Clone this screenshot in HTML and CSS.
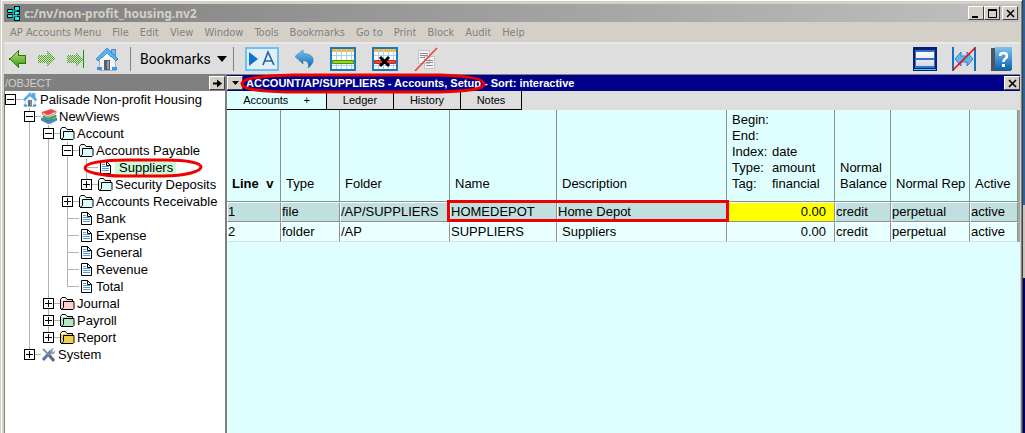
FILE: index.html
```html
<!DOCTYPE html>
<html lang="en">

<head>
    <meta charset="UTF-8">
    <meta name="viewport" content="width=device-width, initial-scale=1.0">
    <title>c:/nv/non-profit_housing.nv2</title>
    <link rel="stylesheet" href="styles.css">
</head>

<body>
    <!-- shared icons -->
    <svg class="defs" width="0" height="0">
        <defs>
            <linearGradient id="green" x1="0" y1="0" x2="0" y2="1">
                <stop offset="0" stop-color="#b5e07c"></stop>
                <stop offset="1" stop-color="#3f9a10"></stop>
            </linearGradient>
            <linearGradient id="blue" x1="0" y1="0" x2="0" y2="1">
                <stop offset="0" stop-color="#7cc4ee"></stop>
                <stop offset="1" stop-color="#0a62b0"></stop>
            </linearGradient>
            <linearGradient id="pane" x1="0" y1="0" x2="0" y2="1">
                <stop offset="0" stop-color="#ffffff"></stop>
                <stop offset="1" stop-color="#d4d8e2"></stop>
            </linearGradient>
            <pattern id="dots" width="2" height="2" patternUnits="userSpaceOnUse">
                <rect width="1" height="1" fill="#4fa81e"></rect>
                <rect x="1" y="1" width="1" height="1" fill="#4fa81e"></rect>
            </pattern>
            <symbol id="house" viewBox="0 0 22 24">
                <path d="M15 2h4v7h-4z" fill="#7fb8e8" stroke="#4a8cc8"></path>
                <path d="M3 12 11 4l8 8v11H3z" fill="#f4f6f8" stroke="#9db4c8"></path>
                <path d="M11 1 0 12l2 2 9-8 9 8 2-2z" fill="#58b4f0" stroke="#1874c0" stroke-width=".7"></path>
                <path d="M8 13h6v10H8z" fill="#5a5f68"></path>
                <path d="M11 14h2v8h-2z" fill="#9aa0a8"></path>
                <path d="M1 20h5v3H1zM16 20h5v3h-5z" fill="#3a94e0"></path>
            </symbol>
            <symbol id="folder" viewBox="0 0 15 13">
                <path d="M.5 12V2.500L2 .5h3.500L7 2.500h5.500v2" fill="#fff" stroke="#000"></path>
                <path d="M1 3h11v2H4l-2 6H1z" fill="currentColor"></path>
                <path d="M3.500 4.500h10.500v7l-1 1H1l2.500-2z" fill="currentColor" stroke="#000"></path>
            </symbol>
            <symbol id="page" viewBox="0 0 11 13">
                <path d="M.5.5h6l4 4v8H.5z" fill="#fff" stroke="#000"></path>
                <path d="M6.500.5v4h4" fill="none" stroke="#000"></path>
                <path d="M2 3.500h3M2 5.500h7M2 7.500h7M2 9.500h7" stroke="#4aa0e0"></path>
            </symbol>
            <symbol id="sheet" viewBox="0 0 26 24">
                <path d="M1 1h24v22H1z" fill="#fff" stroke="#1c7ab8" stroke-width="2"></path>
                <path d="M2 2h22v3H2z" fill="#fcb838"></path>
                <path d="M6.500 2v20M11.500 2v20M16.500 2v20M21.500 2v20M2 8.500h22M2 18.500h22" stroke="#a8d0ec"></path>
            </symbol>
        </defs>
    </svg>

    <div class="window">
        <header class="titlebar">
            <svg class="logo" viewBox="0 0 14 15">
                <path d="M.5 3.500h5v3h-5zM.5 8.500h5v3h-5zM7.500.5h5v4h-5zM7.500 5.500h5v3h-5zM7.500 10.500h5v4h-5z" fill="#00ffff" stroke="#000"></path>
                <path d="M5 5h3M5 10h3M9 4v7" stroke="#00ffff"></path>
            </svg>
            <h1>c:/nv/non-profit_housing.nv2</h1>
            <div class="winbtns">
                <button aria-label="Minimize"><svg viewBox="0 0 9 9"><path d="M0 8h6" stroke="#000" stroke-width="2"></path></svg></button>
                <button aria-label="Maximize"><svg viewBox="0 0 9 9"><path d="M.5 1v7.500h8V1" fill="none" stroke="#000"></path><path d="M0 1h9" stroke="#000" stroke-width="2"></path></svg></button>
                <button class="close" aria-label="Close"><svg viewBox="0 0 9 9"><path d="m1 1 7 7M8 1 1 8" stroke="#000" stroke-width="1.600"></path></svg></button>
            </div>
        </header>

        <nav class="menu">
            <button>AP Accounts Menu</button>
            <button>File</button>
            <button>Edit</button>
            <button>View</button>
            <button>Window</button>
            <button>Tools</button>
            <button>Bookmarks</button>
            <button>Go to</button>
            <button>Print</button>
            <button>Block</button>
            <button>Audit</button>
            <button>Help</button>
        </nav>

        <div class="toolbar">
            <div class="group arrows">
                <button aria-label="Back"><svg width="17" height="18" viewBox="0 0 17 18"><path d="M.7 9 9 1v4h7v8H9v4z" fill="url(#green)" stroke="#2c7a0c"></path></svg></button>
                <button aria-label="Forward"><svg width="17" height="18" viewBox="0 0 17 18"><path d="M17 9 9 1v4H0v8h9v4z" fill="url(#dots)"></path></svg></button>
                <button aria-label="Last"><svg width="17" height="18" viewBox="0 0 17 18"><path d="M16 9 9 1v4H0v8h9v4z" fill="url(#dots)"></path><path d="M16 0h1v18h-1z" fill="#00a000"></path></svg></button>
                <button aria-label="Home"><svg width="22" height="24"><use href="#house"></use></svg></button>
            </div>
            <button class="group bookmarks">Bookmarks
                <svg width="10" height="6" viewBox="0 0 10 6"><path d="M0 0h10L5 6z"></path></svg>
            </button>
            <div class="group tools">
                <button aria-label="Play"><svg width="34" height="24" viewBox="0 0 34 24"><path d="M1 1h32v22H1z" fill="#e4eef6" stroke="#6cc0f4" stroke-width="2"></path><path d="M4 5v14l9-7z" fill="#1070d0"></path><path d="m18 18 5-13 6 13M20 14h7" fill="none" stroke="#2060a8" stroke-width="1.600"></path></svg></button>
                <button aria-label="Undo"><svg width="19" height="20" viewBox="0 0 19 20"><path d="M0 7.500 8 1v3.500c8 0 11 4 10 8-.5 3-3 5-5 6.500 1-3 1-7-5-7.500V15z" fill="url(#blue)" stroke="#2a80b8" stroke-width=".6"></path></svg></button>
                <button aria-label="Insert row"><svg width="26" height="24" viewBox="0 0 26 24"><use href="#sheet"></use><path d="M2.500 13.500h21v3h-21z" fill="#9cd818" stroke="#4a9010"></path></svg></button>
                <button aria-label="Delete row"><svg width="26" height="24" viewBox="0 0 26 24"><use href="#sheet"></use><path d="M2.500 13.500h21v3h-21z" fill="#e84840" stroke="#c02820"></path><path d="m8 10 9 9M17 10l-9 9" stroke="#000" stroke-width="3"></path></svg></button>
                <button aria-label="No notes"><svg width="24" height="24" viewBox="0 0 24 24"><path d="M4.500 3.500h11v13h-11zM10.500 9.500h10v12h-10z" fill="#f4f4f4" stroke="#c4c4c4"></path><path d="M6 6.500h8M6 8.500h8M6 10.500h5M12 13.500h7M12 15.500h7M12 18.500h7" stroke="#8c8c8c"></path><path d="M1 24 23 1" stroke="#f04040" stroke-width="1.600"></path></svg></button>
            </div>
            <div class="group right">
                <button aria-label="Split view"><svg width="24" height="24" viewBox="0 0 24 24"><path d="M0 0h24v24H0z" fill="#08206c"></path><path d="M2 3h20v18H2z" fill="#3470d0"></path><path d="M3 5h18v6H3zM3 13h18v6H3z" fill="url(#pane)"></path><path d="M1 22.500h22" stroke="#28d8f8"></path></svg></button>
                <button aria-label="Fit width"><svg width="24" height="24" viewBox="0 0 24 24"><path d="M1 0v24M23 0v24" stroke="#1870c0" stroke-width="2"></path><path d="m3 12 6-7v4h6V5l6 7-6 7v-4H9v4z" fill="#5cb8ec" stroke="#2a80c8"></path><path d="M1 23 23 1" stroke="#f00" stroke-width="1.600"></path></svg></button>
                <button aria-label="Help"><svg width="21" height="24" viewBox="0 0 21 24"><path d="M0 1h20v23H0z" fill="#4a5560"></path><path d="M4 0h17v23H4z" fill="url(#blue)"></path><path d="M9 9c0-4 7-4 7 0 0 3-3.500 2-3.500 6" fill="none" stroke="#fff" stroke-width="2.500"></path><path d="M11 17h3v3h-3z" fill="#fff"></path></svg></button>
            </div>
        </div>

        <main class="panes">
            <section class="explorer">
                <div class="panehead">
                    <h2>/OBJECT</h2>
                    <button aria-label="Expand pane"><svg width="9" height="9" viewBox="0 0 9 9"><path d="M0 4.500h6" stroke="#000" stroke-width="2"></path><path d="M4 .5 9 4.500l-5 4z"></path></svg></button>
                </div>
                <ul class="tree">
                    <li>
                        <div class="node"><button class="toggle" aria-label="Collapse"></button><i></i><svg width="16" height="15"><use href="#house"></use></svg><a href="#">Palisade Non-profit Housing</a></div>
                        <ul>
                            <li>
                                <div class="node"><button class="toggle" aria-label="Collapse"></button><i></i><svg width="16" height="15" viewBox="0 0 16 15"><path d="m1 3 9-3 5 2-8 4z" fill="#e84848"></path><path d="m1 3 6 3 8-4v2L7 8 1 5z" fill="#f8d8d8" stroke="#b83030" stroke-width=".6"></path><path d="m2 7 5 2 8-3v2l-8 4-5-3z" fill="#40b060" stroke="#287840" stroke-width=".6"></path><path d="m0 9 7 3 9-3v2l-8 4-8-4z" fill="#4090d8" stroke="#2060a0" stroke-width=".6"></path></svg><a href="#">NewViews</a></div>
                                <ul>
                                    <li>
                                        <div class="node"><button class="toggle" aria-label="Collapse"></button><i></i><svg class="aqua" width="15" height="13"><use href="#folder"></use></svg><a href="#">Account</a></div>
                                        <ul>
                                            <li>
                                                <div class="node"><button class="toggle" aria-label="Collapse"></button><i></i><svg class="aqua" width="15" height="13"><use href="#folder"></use></svg><a href="#">Accounts Payable</a></div>
                                                <ul>
                                                    <li>
                                                        <div class="node leaf current"><i></i><svg width="11" height="13"><use href="#page"></use></svg><a href="#">Suppliers</a>
                                                            <svg class="mark" viewBox="0 0 120 20" preserveAspectRatio="none"><path d="M2 10C2 5 20 2 44 2H84C104 2 118 5 118 9S104 18 80 18H40C18 18 2 14 2 10z"></path></svg>
                                                        </div>
                                                    </li>
                                                    <li>
                                                        <div class="node"><button class="toggle plus" aria-label="Expand"></button><i></i><svg class="aqua" width="15" height="13"><use href="#folder"></use></svg><a href="#">Security Deposits</a></div>
                                                    </li>
                                                </ul>
                                            </li>
                                            <li>
                                                <div class="node"><button class="toggle plus" aria-label="Expand"></button><i></i><svg class="aqua" width="15" height="13"><use href="#folder"></use></svg><a href="#">Accounts Receivable</a></div>
                                            </li>
                                            <li><div class="node leaf"><i></i><svg width="11" height="13"><use href="#page"></use></svg><a href="#">Bank</a></div></li>
                                            <li><div class="node leaf"><i></i><svg width="11" height="13"><use href="#page"></use></svg><a href="#">Expense</a></div></li>
                                            <li><div class="node leaf"><i></i><svg width="11" height="13"><use href="#page"></use></svg><a href="#">General</a></div></li>
                                            <li><div class="node leaf"><i></i><svg width="11" height="13"><use href="#page"></use></svg><a href="#">Revenue</a></div></li>
                                            <li><div class="node leaf"><i></i><svg width="11" height="13"><use href="#page"></use></svg><a href="#">Total</a></div></li>
                                        </ul>
                                    </li>
                                    <li>
                                        <div class="node"><button class="toggle plus" aria-label="Expand"></button><i></i><svg class="pink" width="15" height="13"><use href="#folder"></use></svg><a href="#">Journal</a></div>
                                    </li>
                                    <li>
                                        <div class="node"><button class="toggle plus" aria-label="Expand"></button><i></i><svg class="mint" width="15" height="13"><use href="#folder"></use></svg><a href="#">Payroll</a></div>
                                    </li>
                                    <li>
                                        <div class="node"><button class="toggle plus" aria-label="Expand"></button><i></i><svg class="gold" width="15" height="13"><use href="#folder"></use></svg><a href="#">Report</a></div>
                                    </li>
                                </ul>
                            </li>
                            <li>
                                <div class="node"><button class="toggle plus" aria-label="Expand"></button><i></i><svg width="15" height="15" viewBox="0 0 15 15"><path d="m2 13 8-9" stroke="#5078b0" stroke-width="3"></path><path d="M9 5c0-3 2-4 4-4l-2 3 2 1 1-2c1 3-2 5-4 4z" fill="#90a0b0"></path><path d="m2 2 6 6" stroke="#909498" stroke-width="2"></path><path d="m8 8 5 6" stroke="#606870" stroke-width="3"></path></svg><a href="#">System</a></div>
                            </li>
                        </ul>
                    </li>
                </ul>
            </section>

            <section class="accounts">
                <div class="panehead">
                    <button aria-label="Pane menu"><svg width="7" height="4" viewBox="0 0 7 4"><path d="M0 0h7L3.500 4z"></path></svg></button>
                    <h2>ACCOUNT/AP/SUPPLIERS - Accounts, Setup - Sort: interactive</h2>
                    <button aria-label="Close pane"><svg width="9" height="9" viewBox="0 0 9 9"><path d="m1 1 7 7M8 1 1 8" stroke="#000" stroke-width="1.600"></path></svg></button>
                    <svg class="mark" viewBox="0 0 246 20" preserveAspectRatio="none"><path d="M2 10C2 5 16 2 54 1H200C230 2 244 5 244 10S230 17 200 18H46C16 17 2 15 2 10z"></path></svg>
                </div>
                <div class="tabs">
                    <button class="active">Accounts <span>+</span></button>
                    <button>Ledger</button>
                    <button>History</button>
                    <button>Notes</button>
                </div>
                <table>
                    <colgroup>
                        <col class="c-line">
                        <col class="c-type">
                        <col class="c-folder">
                        <col class="c-name">
                        <col class="c-desc">
                        <col class="c-amount">
                        <col class="c-balance">
                        <col class="c-rep">
                        <col class="c-active">
                    </colgroup>
                    <thead>
                        <tr>
                            <th class="sorted">Line <span>v</span></th>
                            <th>Type</th>
                            <th>Folder</th>
                            <th>Name</th>
                            <th>Description</th>
                            <th class="index">
                                <dl>
                                    <dt>Begin:</dt><dd></dd>
                                    <dt>End:</dt><dd></dd>
                                    <dt>Index:</dt><dd>date</dd>
                                    <dt>Type:</dt><dd>amount</dd>
                                    <dt>Tag:</dt><dd>financial</dd>
                                </dl>
                            </th>
                            <th>Normal Balance</th>
                            <th>Normal Rep</th>
                            <th>Active</th>
                        </tr>
                    </thead>
                    <tbody>
                        <tr class="selected">
                            <td>1</td>
                            <td>file</td>
                            <td>/AP/SUPPLIERS</td>
                            <td class="boxed">HOMEDEPOT<span class="box"></span></td>
                            <td>Home Depot</td>
                            <td class="num">0.00</td>
                            <td>credit</td>
                            <td>perpetual</td>
                            <td>active</td>
                        </tr>
                        <tr>
                            <td>2</td>
                            <td>folder</td>
                            <td>/AP</td>
                            <td>SUPPLIERS</td>
                            <td class="indent">Suppliers</td>
                            <td class="num">0.00</td>
                            <td>credit</td>
                            <td>perpetual</td>
                            <td>active</td>
                        </tr>
                    </tbody>
                </table>
            </section>
        </main>
    </div>
</body>

</html>
```
FILE: styles.css
```css
* {
    padding: 0;
    margin: 0;
    box-sizing: border-box;
}

body {
    min-height: 100vh;
    display: flex;
    padding-right: 2px;
    background: linear-gradient(#2a64a0 0 205px, #c8c4bc 205px 278px, #00006c 278px);
    font-family: "Liberation Sans", Arial, sans-serif;
    font-size: 13px;
    color: #000;
}

button {
    font: inherit;
    color: inherit;
    background: none;
    border: none;
}

svg {
    display: block;
    flex: none;
}

.defs {
    position: absolute;
}

.window {
    flex: 1;
    display: flex;
    flex-direction: column;
    background-color: #d4d0c8;
    border-left: 1px solid #d4d0c8;
    border-right: 1px solid #404040;
    box-shadow: inset 1px 1px #fff, inset -1px 0 #808080;
    padding: 4px 2px 0 3px;
}

/* title bar */
.titlebar {
    display: flex;
    align-items: center;
    height: 18px;
    padding: 0 2px 0 3px;
    background: linear-gradient(to right, #808080, #c0c0c0);
}

.logo {
    width: 14px;
    height: 15px;
}

.titlebar h1 {
    flex: 1;
    margin-left: 3px;
    font: bold 12px "Noto Sans", sans-serif;
    color: #d4d0c8;
}

.winbtns {
    display: flex;
}

.winbtns button,
.panehead button {
    display: flex;
    align-items: center;
    justify-content: center;
    width: 16px;
    height: 14px;
    background-color: #d4d0c8;
    border: 1px solid;
    border-color: #fff #404040 #404040 #fff;
}

.winbtns svg {
    width: 9px;
    height: 9px;
}

.winbtns .close {
    margin-left: 2px;
}

/* menu */
.menu {
    display: flex;
    gap: 11px;
    height: 20px;
    padding-left: 6px;
    font: 11px "DejaVu Sans Condensed", "DejaVu Sans", sans-serif;
    color: #808080;
}

/* toolbar */
.toolbar {
    display: flex;
    align-items: center;
    height: 32px;
    background-color: #dedede;
    border-top: 2px solid #e8e8e8;
}

.group {
    display: flex;
    align-items: center;
    height: 24px;
}

.arrows {
    gap: 12px;
    padding: 0 12px 0 5px;
    shape-rendering: crispEdges;
}

.bookmarks {
    gap: 6px;
    padding: 0 6px 0 9px;
    border-left: 1px solid #808080;
    border-right: 1px solid #808080;
    font: 14px Roboto, sans-serif;
}

.tools {
    gap: 16px;
    padding-left: 11px;
}

.right {
    gap: 15px;
    margin-left: auto;
    padding-right: 8px;
}

/* panes */
.panes {
    flex: 1;
    display: flex;
    border-top: 1px solid #808080;
}

.panehead {
    position: relative;
    display: flex;
    align-items: center;
    height: 16px;
}

.panehead h2 {
    flex: 1;
    font-size: 11px;
    line-height: 16px;
    color: #fff;
}

.mark {
    position: absolute;
    overflow: visible;
    fill: none;
    stroke: #f00000;
    stroke-width: 3px;
}

.explorer {
    width: 223px;
    background-color: #fff;
    border-left: 1px solid #808080;
    border-right: 2px solid #808080;
}

.explorer .panehead {
    background-color: #808080;
}

.explorer h2 {
    font-weight: normal;
    color: #d4d0c8;
}

/* tree */
.tree ul {
    padding-left: 19px;
}

.tree li {
    list-style: none;
    background: linear-gradient(#b4b4b4, #b4b4b4) 5px 0 / 1px 100% no-repeat;
}

.tree > li {
    background: none;
}

.tree li:last-child {
    background-size: 1px 9px;
}

.node {
    position: relative;
    display: flex;
    align-items: center;
    height: 17px;
}

.node i {
    width: 6px;
    height: 1px;
    background-color: #b4b4b4;
}

.node a {
    color: #000;
    text-decoration: none;
    line-height: 17px;
    white-space: nowrap;
}

.node svg + a {
    margin-left: 2px;
}

.toggle {
    width: 11px;
    height: 11px;
    border: 1px solid #000;
    background: linear-gradient(#000, #000) 1px 4px / 7px 1px no-repeat #fff;
}

.toggle.plus {
    background: linear-gradient(#000, #000) 1px 4px / 7px 1px no-repeat, linear-gradient(#000, #000) 4px 1px / 1px 7px no-repeat #fff;
}

.leaf i {
    width: 11px;
    margin: 0 2px 0 6px;
}

.leaf svg + a {
    margin-left: 4px;
}

.current a {
    padding: 0 3px 0 4px;
    background-color: #ccf8d4;
}

.current .mark {
    left: 2px;
    top: -1px;
    width: 120px;
    height: 20px;
}

.aqua {
    color: #dcfcfc;
}

.pink {
    color: #ffd0d0;
}

.mint {
    color: #b4e8c4;
}

.gold {
    color: #f0d050;
}

/* accounts pane */
.accounts {
    flex: 1;
    background-color: #dfffff;
}

.accounts .panehead {
    background-color: #00008b;
}

.accounts .panehead h2 {
    margin-left: 3px;
}

.accounts .panehead .mark {
    left: 13px;
    top: -1px;
    width: 246px;
    height: 20px;
}

.tabs {
    display: flex;
    height: 19px;
    background-color: #dedede;
}

.tabs button {
    width: 67px;
    font-size: 11px;
    background-color: #dedede;
    border-right: 1px solid #000;
    border-bottom: 1px solid #000;
}

.tabs button:last-child {
    width: 61px;
}

.tabs .active {
    width: 100px;
    background-color: #dfffff;
}

.tabs span {
    margin-left: 12px;
}

table {
    width: 100%;
    table-layout: fixed;
    border-collapse: separate;
    border-spacing: 0;
    border-right: 2px solid #a0a8a8;
}

.c-line {
    width: 54px;
}

.c-type {
    width: 59px;
}

.c-folder {
    width: 110px;
}

.c-name {
    width: 107px;
}

.c-amount {
    width: 108px;
}

.c-balance {
    width: 56px;
}

.c-rep {
    width: 79px;
}

.c-active {
    width: 48px;
}

th {
    height: 92px;
    padding: 0 0 9px 5px;
    font-weight: normal;
    line-height: 16px;
    text-align: left;
    vertical-align: bottom;
    border-right: 1px solid #849494;
    border-bottom: 1px solid #849494;
}

.sorted {
    font-weight: bold;
}

.sorted span {
    margin-left: 4px;
}

.index dl {
    display: grid;
    grid-template-columns: 40px 1fr;
    grid-auto-rows: 16px;
}

td {
    height: 20px;
    line-height: 18px;
    background-color: #eaffff;
    border: 1px solid #fff;
    border-right-color: #849494;
    border-bottom-color: #d0e4e4;
}

.selected td {
    background-color: #c0e0e0;
    border-bottom-color: #849494;
}

.num {
    padding-right: 8px;
    text-align: right;
}

.selected .num {
    background-color: #ffff00;
}

.indent {
    padding-left: 4px;
}

.boxed {
    position: relative;
}

/* red frame over the name and description cells */
.box {
    position: absolute;
    left: -4px;
    top: -3px;
    width: 282px;
    height: 22px;
    border: 3px solid #f00000;
}
```
